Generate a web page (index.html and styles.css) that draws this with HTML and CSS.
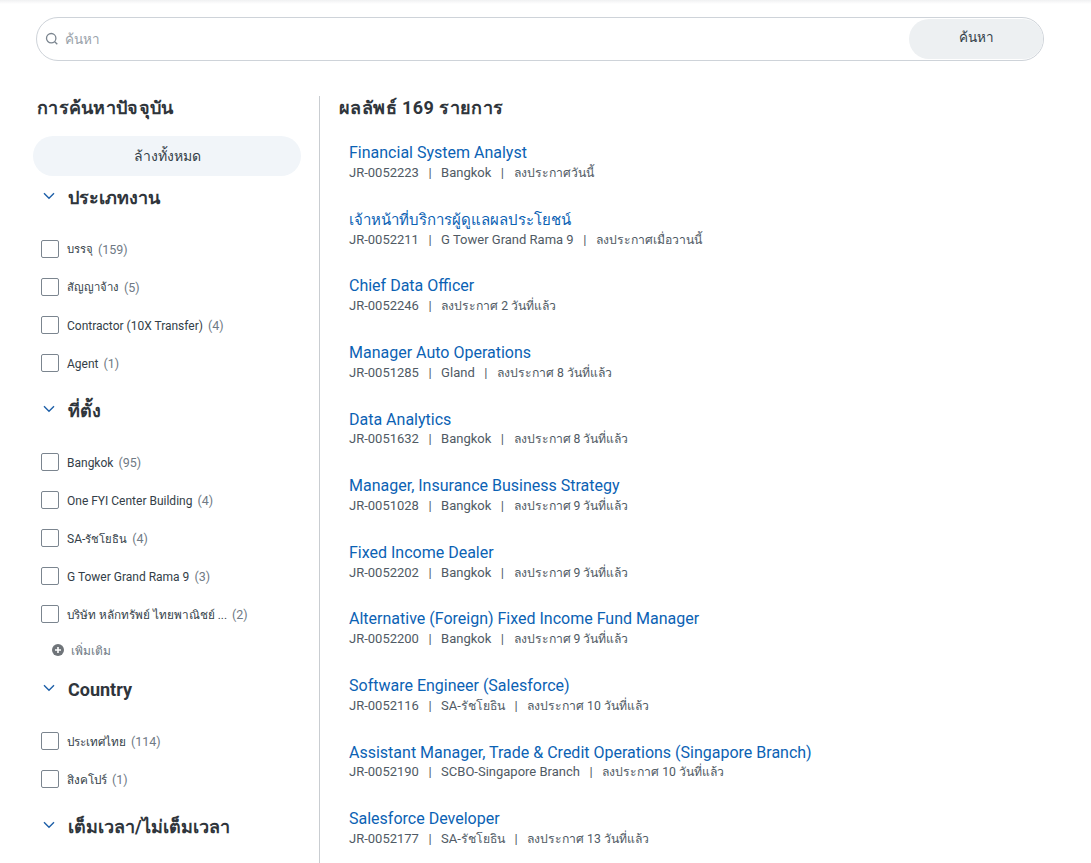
FILE: index.html
```html
<!DOCTYPE html>
<html lang="th">
<head>
<meta charset="utf-8">
<title>ค้นหา</title>
<link rel="stylesheet" href="styles.css">
</head>
<body>
<div class="topline"></div>
<form class="search">
  <svg class="search-icon" viewBox="0 0 14 14" width="14" height="14"><circle cx="6.2" cy="6.2" r="4.7"/><path d="M9.7 9.7l2.6 2.6"/></svg>
  <span class="placeholder">ค้นหา</span>
  <span class="search-btn">ค้นหา</span>
</form>
<div class="main">
  <aside class="side">
    <h2 class="side-title">การค้นหาปัจจุบัน</h2>
    <div class="clear">ล้างทั้งหมด</div>

    <div class="facet-head"><svg class="chev" viewBox="0 0 12 8" width="12" height="8"><path d="M1 1.2l5 5 5-5"/></svg><h3>ประเภทงาน</h3></div>
    <ul class="opts">
      <li><i class="box"></i><span class="th">บรรจุ</span><em>(159)</em></li>
      <li><i class="box"></i><span class="th">สัญญาจ้าง</span><em>(5)</em></li>
      <li><i class="box"></i><span class="lat">Contractor (10X Transfer)</span><em>(4)</em></li>
      <li><i class="box"></i><span class="lat">Agent</span><em>(1)</em></li>
    </ul>

    <div class="facet-head"><svg class="chev" viewBox="0 0 12 8" width="12" height="8"><path d="M1 1.2l5 5 5-5"/></svg><h3>ที่ตั้ง</h3></div>
    <ul class="opts">
      <li><i class="box"></i><span class="lat">Bangkok</span><em>(95)</em></li>
      <li><i class="box"></i><span class="lat">One FYI Center Building</span><em>(4)</em></li>
      <li><i class="box"></i><span class="lat">SA-<span class="th">รัชโยธิน</span></span><em>(4)</em></li>
      <li><i class="box"></i><span class="lat">G Tower Grand Rama 9</span><em>(3)</em></li>
      <li><i class="box"></i><span class="th-wide">บริษัท หลักทรัพย์ ไทยพาณิชย์ ...</span><em>(2)</em></li>
    </ul>
    <div class="more"><svg viewBox="0 0 12 12" width="12" height="12"><circle cx="6" cy="6" r="6"/><path d="M6 3v6M3 6h6"/></svg><span>เพิ่มเติม</span></div>

    <div class="facet-head"><svg class="chev" viewBox="0 0 12 8" width="12" height="8"><path d="M1 1.2l5 5 5-5"/></svg><h3>Country</h3></div>
    <ul class="opts">
      <li><i class="box"></i><span class="th-wide">ประเทศไทย</span><em>(114)</em></li>
      <li><i class="box"></i><span class="th-wide">สิงคโปร์</span><em>(1)</em></li>
    </ul>

    <div class="facet-head"><svg class="chev" viewBox="0 0 12 8" width="12" height="8"><path d="M1 1.2l5 5 5-5"/></svg><h3>เต็มเวลา/ไม่เต็มเวลา</h3></div>
  </aside>
  <section class="results">
    <h2 class="res-title">ผลลัพธ์ 169 รายการ</h2>
    <ul class="jobs">
      <li><a>Financial System Analyst</a><p><span>JR-0052223</span><b>|</b><span>Bangkok</span><b>|</b><span class="th">ลงประกาศวันนี้</span></p></li>
      <li><a class="th">เจ้าหน้าที่บริการผู้ดูแลผลประโยชน์</a><p><span>JR-0052211</span><b>|</b><span>G Tower Grand Rama 9</span><b>|</b><span class="th">ลงประกาศเมื่อวานนี้</span></p></li>
      <li><a>Chief Data Officer</a><p><span>JR-0052246</span><b>|</b><span class="th">ลงประกาศ 2 วันที่แล้ว</span></p></li>
      <li><a>Manager Auto Operations</a><p><span>JR-0051285</span><b>|</b><span>Gland</span><b>|</b><span class="th">ลงประกาศ 8 วันที่แล้ว</span></p></li>
      <li><a>Data Analytics</a><p><span>JR-0051632</span><b>|</b><span>Bangkok</span><b>|</b><span class="th">ลงประกาศ 8 วันที่แล้ว</span></p></li>
      <li><a>Manager, Insurance Business Strategy</a><p><span>JR-0051028</span><b>|</b><span>Bangkok</span><b>|</b><span class="th">ลงประกาศ 9 วันที่แล้ว</span></p></li>
      <li><a>Fixed Income Dealer</a><p><span>JR-0052202</span><b>|</b><span>Bangkok</span><b>|</b><span class="th">ลงประกาศ 9 วันที่แล้ว</span></p></li>
      <li><a>Alternative (Foreign) Fixed Income Fund Manager</a><p><span>JR-0052200</span><b>|</b><span>Bangkok</span><b>|</b><span class="th">ลงประกาศ 9 วันที่แล้ว</span></p></li>
      <li><a>Software Engineer (Salesforce)</a><p><span>JR-0052116</span><b>|</b><span>SA-<span class="th">รัชโยธิน</span></span><b>|</b><span class="th">ลงประกาศ 10 วันที่แล้ว</span></p></li>
      <li><a>Assistant Manager, Trade &amp; Credit Operations (Singapore Branch)</a><p><span>JR-0052190</span><b>|</b><span>SCBO-Singapore Branch</span><b>|</b><span class="th">ลงประกาศ 10 วันที่แล้ว</span></p></li>
      <li><a>Salesforce Developer</a><p><span>JR-0052177</span><b>|</b><span>SA-<span class="th">รัชโยธิน</span></span><b>|</b><span class="th">ลงประกาศ 13 วันที่แล้ว</span></p></li>
    </ul>
  </section>
</div>
</body>
</html>
```

FILE: styles.css
```css
* { box-sizing: border-box; }
html, body { height: 100%; }
body {
  margin: 0;
  height: 863px;
  overflow: hidden;
  background: #fff;
  color: #333e48;
  font-family: Roboto, "Noto Sans", "Liberation Sans", sans-serif;
}
.th { font-size: .94em; }
.th-wide { font-size: .98em; }
.lat { margin-top: 2px; }
.topline { height: 4px; background: linear-gradient(#f0f1f2, #fff); }
.search {
  display: flex;
  align-items: center;
  width: 1008px;
  height: 44px;
  margin: 13px 0 0 36px;
  padding-left: 8px;
  border: 1px solid #ced3d9;
  border-radius: 22px;
}
.search-icon { fill: none; stroke: #7b858f; stroke-width: 1.3; flex: none; }
.placeholder { margin-left: 6px; font-size: 13.5px; color: #9aa2aa; flex: 1; }
.search-btn {
  width: 134px;
  height: 40px;
  display: flex;
  align-items: center;
  justify-content: center;
  border-radius: 20px;
  background: #edf0f2;
  font-size: 13.5px;
  padding-bottom: 5px;
}
.main { display: flex; margin-top: 35px; height: 767px; }
.side { width: 284px; margin-left: 36px; flex: none; }
.side-title { margin: 0; padding-left: 1px; font-size: 18px; line-height: 24px; font-weight: 700; letter-spacing: .3px; color: #2f353b; }
.clear {
  width: 268px;
  height: 40px;
  margin: 16px 0 0 -3px;
  border-radius: 20px;
  background: #f1f5f9;
  display: flex;
  align-items: center;
  justify-content: center;
  font-size: 14px;
}
.facet-head { display: flex; align-items: center; height: 24px; margin-top: 10px; }
.chev { fill: none; stroke: #1d5fa8; stroke-width: 1.4; margin: 0 0 4px 7px; flex: none; }
.facet-head h3 { margin: 0 0 0 13px; font-size: 18px; line-height: 24px; font-weight: 700; color: #2f353b; }
.opts { list-style: none; margin: 30px 0 0; padding: 0 0 0 5px; display: flex; flex-direction: column; gap: 20px; }
.opts li { display: flex; align-items: center; height: 18px; font-size: 12px; }
.box { width: 18px; height: 18px; border: 1px solid #7b858f; border-radius: 2px; margin-right: 8px; flex: none; }
.opts em { font-style: normal; color: #6f7a85; font-size: 12.5px; margin-left: 5px; }
.more { display: flex; align-items: center; height: 16px; margin: 19px 0 0 16px; font-size: 12px; color: #6f7a85; }
.more svg { margin-right: 7px; }
.more circle { fill: #6f7479; }
.more path { stroke: #fff; stroke-width: 1.6; fill: none; }
.more + .facet-head { margin-top: 20px; }
.opts + .facet-head { margin-top: 27px; }
.results { flex: 1; border-left: 1px solid #c9cdd1; margin-left: -1px; padding-left: 19px; }
.res-title { margin: 0; font-size: 18px; line-height: 24px; font-weight: 700; letter-spacing: .42px; color: #2f353b; }
.jobs { list-style: none; margin: 23.3px 0 0 10px; padding: 0; }
.jobs li { height: 66.6px; }
.jobs a { display: block; color: #0b62b4; font-size: 16px; line-height: 20.7px; }
.jobs a.th { font-size: 15px; }
.jobs p { display: flex; margin: 0; font-size: 13px; line-height: 18px; color: #505a64; }
.jobs b { font-weight: 400; margin: 0 9.5px; }
```
